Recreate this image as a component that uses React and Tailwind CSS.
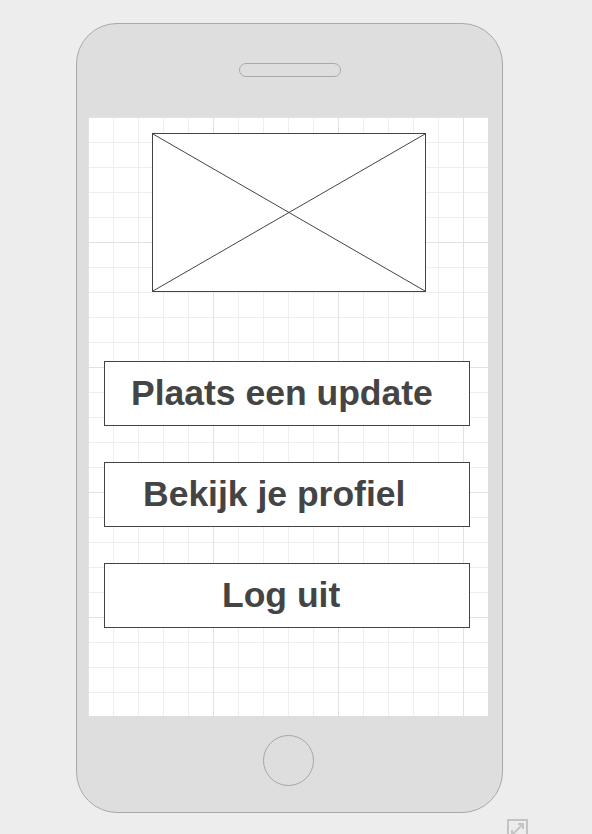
import React from "react";

const buttons = [
  { label: "Plaats een update", pad: "pl-[26px]" },
  { label: "Bekijk je profiel", pad: "pl-[38px]" },
  { label: "Log uit", pad: "pl-[117px]" },
];

const App = () => {
  return (
    <div className="min-h-[834px] overflow-hidden bg-[#ededed] pt-[23px] font-['Liberation_Sans',Arial,sans-serif]">
      <div className="ml-[76px] flex h-[790px] w-[427px] flex-col rounded-[41px] border border-[#a9a9a9] bg-[#dedede] pl-[11px] pt-[39px]">
        {/* earpiece */}
        <div className="ml-[151px] h-[14px] w-[102px] rounded-full border border-[#aaaaaa]" />

        {/* screen */}
        <div className="mt-[40px] h-[599px] w-[400px] bg-white bg-[linear-gradient(to_right,#e2e2e2_1px,transparent_1px),linear-gradient(to_bottom,#e2e2e2_1px,transparent_1px),linear-gradient(to_right,#eeeeee_1px,transparent_1px),linear-gradient(to_bottom,#eeeeee_1px,transparent_1px)] bg-[size:125px_125px,125px_125px,25px_25px,25px_25px] pl-[16px] pt-[16px]">
          <div className="ml-[48px] h-[159px] w-[274px] border border-[#444444] bg-white">
            <svg className="h-full w-full" viewBox="0 0 100 100" preserveAspectRatio="none">
              <line x1="0" y1="0" x2="100" y2="100" stroke="#444" strokeWidth="1" vectorEffect="non-scaling-stroke" />
              <line x1="100" y1="0" x2="0" y2="100" stroke="#444" strokeWidth="1" vectorEffect="non-scaling-stroke" />
            </svg>
          </div>

          <div className="mt-[69px] flex flex-col gap-[36px]">
            {buttons.map((b) => (
              <div
                key={b.label}
                className={`flex h-[65px] w-[366px] items-center border border-[#444444] bg-white ${b.pad}`}
              >
                <span className="text-[35.5px] font-bold leading-none text-[#444444]">{b.label}</span>
              </div>
            ))}
          </div>
        </div>

        {/* home button */}
        <div className="ml-[175px] mt-[19px] h-[51px] w-[51px] rounded-full border border-[#a6a6a6]" />
      </div>

      <div className="ml-[507px] mt-[6px]">
        <svg width="21" height="21" viewBox="0 0 21 21" fill="none" stroke="#c4c4c4" strokeWidth="2">
          <rect x="1" y="1" width="19" height="19" />
          <line x1="5" y1="16" x2="16" y2="5" />
          <polyline points="11,5 16,5 16,10" />
          <polyline points="5,11 5,16 10,16" />
        </svg>
      </div>
    </div>
  );
};

export default App;
